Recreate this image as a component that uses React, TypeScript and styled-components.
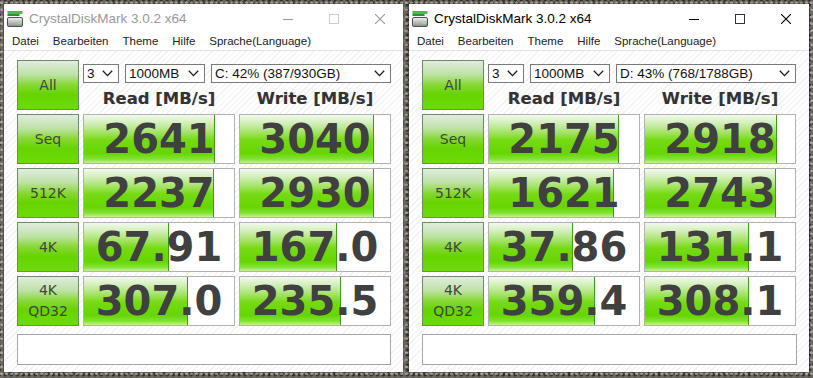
import React from 'react';
import styled, { createGlobalStyle } from 'styled-components';

const GlobalStyle = createGlobalStyle`
  html, body { margin: 0; padding: 0; }
  body {
    width: 813px;
    height: 378px;
    overflow: hidden;
    font-family: "Liberation Sans", Arial, sans-serif;
  }
`;

const Desktop = styled.div`
  width: 813px;
  height: 378px;
  box-sizing: border-box;
  display: flex;
  gap: 6px;
  padding: 4px;
  background:
    radial-gradient(circle at 30% 40%, rgba(215, 208, 195, 0.55) 0 1.1px, transparent 1.7px) 0 0 / 5px 7px,
    radial-gradient(circle at 70% 60%, rgba(25, 23, 21, 0.65) 0 1.3px, transparent 1.9px) 1px 2px / 6px 5px,
    radial-gradient(circle at 50% 50%, rgba(170, 160, 140, 0.5) 0 2px, transparent 2.6px) 2px 3px / 9px 11px,
    radial-gradient(circle at 40% 30%, rgba(60, 56, 52, 0.7) 0 2.5px, transparent 3px) 4px 1px / 13px 9px,
    #6b665f;
`;

const Window = styled.div<{ $w: number }>`
  width: ${(p) => p.$w}px;
  height: 368px;
  display: flex;
  flex-direction: column;
  background: #ffffff;
  box-shadow: 0 0 0 1px rgba(0, 0, 0, 0.18);
`;

const TitleBar = styled.div`
  height: 29px;
  display: flex;
  align-items: center;
  padding-left: 3px;
`;

const Title = styled.span<{ $active: boolean }>`
  margin-left: 6px;
  font-family: "Liberation Sans", Arial, sans-serif;
  font-size: 13.5px;
  color: ${(p) => (p.$active ? '#000000' : '#999999')};
  white-space: nowrap;
`;

const Controls = styled.div`
  margin-left: auto;
  display: flex;
  height: 100%;
`;

const ControlButton = styled.div`
  width: 46px;
  height: 100%;
  display: flex;
  align-items: center;
  justify-content: center;
`;

const MenuBar = styled.div`
  height: 17px;
  display: flex;
  padding-left: 1px;
`;

const MenuItem = styled.span`
  padding: 0 7px;
  font-size: 11.5px;
  line-height: 17px;
  color: #222222;
`;

const Content = styled.div`
  flex: 1;
  border-top: 1px solid #e2e2e2;
  padding: 9px 12px 7px 13px;
  display: flex;
  flex-direction: column;
  background: repeating-linear-gradient(135deg, #ffffff 0 3px, #f2f2f2 3px 4px);
`;

const Board = styled.div`
  display: grid;
  grid-template-columns: 62px 152px 152px;
  grid-auto-rows: 50px;
  gap: 4px;
`;

const LabelButton = styled.div`
  box-sizing: border-box;
  border: 1px solid #6e8a66;
  background: linear-gradient(180deg, #dfece0 0%, #bfe2a6 28%, #86d834 50%, #66d400 70%, #6cdc08 100%);
  display: flex;
  flex-direction: column;
  align-items: center;
  justify-content: center;
  font-family: "DejaVu Sans", Verdana, sans-serif;
  font-size: 14px;
  line-height: 21px;
  color: #3e4838;
`;

const TopPanel = styled.div`
  grid-column: 2 / span 2;
  display: flex;
  flex-direction: column;
  padding-top: 4px;
`;

const Selectors = styled.div`
  display: flex;
  gap: 6px;
`;

const Select = styled.div<{ $w: number }>`
  box-sizing: border-box;
  width: ${(p) => p.$w}px;
  height: 19px;
  border: 1px solid #7a7a7a;
  background: #ffffff;
  display: flex;
  align-items: center;
  justify-content: space-between;
  padding: 0 5px 0 3px;
  font-size: 13.5px;
  color: #111111;
  white-space: nowrap;
`;

const Headers = styled.div`
  margin-top: 6px;
  display: grid;
  grid-template-columns: 152px 152px;
  gap: 4px;
`;

const Header = styled.div`
  text-align: center;
  font-family: "DejaVu Sans", Verdana, sans-serif;
  font-weight: bold;
  font-size: 16.5px;
  line-height: 20px;
  color: #333333;
  text-shadow: 0 0 1px rgba(120, 130, 200, 0.35);
`;

const Cell = styled.div`
  position: relative;
  box-sizing: border-box;
  border: 1px solid #b2b2b2;
  background: #ffffff;
  overflow: hidden;
  display: flex;
  align-items: center;
  justify-content: center;
`;

const Bar = styled.div`
  position: absolute;
  left: 0;
  top: 0;
  bottom: 0;
  box-sizing: border-box;
  border-right: 1px solid #3f9a18;
  background: linear-gradient(180deg, #f3f9ef 0%, #d4efbc 16%, #a0e25e 38%, #76da14 52%, #66d600 80%, #84e238 92%, #c4f296 100%);
`;

const Value = styled.span`
  position: relative;
  font-family: "DejaVu Sans", Verdana, sans-serif;
  font-weight: bold;
  font-size: 40px;
  line-height: 48px;
  color: #404040;
  white-space: nowrap;
`;

const Status = styled.div`
  margin-top: 8px;
  height: 31px;
  box-sizing: border-box;
  border: 1px solid #a6a6a6;
  background: #ffffff;
`;

const AppIcon = () => (
  <svg width="16" height="16" viewBox="0 0 16 16">
    <defs>
      <linearGradient id="drv" x1="0" y1="0" x2="0" y2="1">
        <stop offset="0" stopColor="#f4f4f4" />
        <stop offset="1" stopColor="#8c8c8c" />
      </linearGradient>
    </defs>
    <rect x="0.5" y="0" width="15" height="3" fill="#46c046" />
    <rect x="0.5" y="3" width="12" height="2" fill="#2c922c" />
    <rect x="0.5" y="6.5" width="15" height="9" rx="1.5" fill="url(#drv)" stroke="#505050" />
    <rect x="11" y="11" width="3" height="2" fill="#7cf07c" />
  </svg>
);

const Chevron = () => (
  <svg width="11" height="7" viewBox="0 0 11 7">
    <polyline points="0.8,0.8 5.5,5.6 10.2,0.8" fill="none" stroke="#1a1a1a" strokeWidth="1.3" />
  </svg>
);

const WinGlyph = ({ kind, color }: { kind: 'min' | 'max' | 'close'; color: string }) => (
  <svg width="10" height="10" viewBox="0 0 10 10">
    {kind === 'min' && <line x1="0" y1="5.5" x2="10" y2="5.5" stroke={color} strokeWidth="1" />}
    {kind === 'max' && <rect x="0.5" y="0.5" width="9" height="9" fill="none" stroke={color} strokeWidth="1" />}
    {kind === 'close' && (
      <>
        <line x1="0" y1="0" x2="10" y2="10" stroke={color} strokeWidth="1.1" />
        <line x1="10" y1="0" x2="0" y2="10" stroke={color} strokeWidth="1.1" />
      </>
    )}
  </svg>
);

type Row = { label: string[]; read: string; readPct: number; write: string; writePct: number };

type WinData = { width: number; active: boolean; drive: string; rows: Row[] };

const windows: WinData[] = [
  {
    width: 399,
    active: false,
    drive: 'C: 42% (387/930GB)',
    rows: [
      { label: ['Seq'], read: '2641', readPct: 87.6, write: '3040', writePct: 89 },
      { label: ['512K'], read: '2237', readPct: 86.4, write: '2930', writePct: 89 },
      { label: ['4K'], read: '67.91', readPct: 56.5, write: '167.0', writePct: 64.5 },
      { label: ['4K', 'QD32'], read: '307.0', readPct: 69.5, write: '235.5', writePct: 67 },
    ],
  },
  {
    width: 400,
    active: true,
    drive: 'D: 43% (768/1788GB)',
    rows: [
      { label: ['Seq'], read: '2175', readPct: 86.5, write: '2918', writePct: 88 },
      { label: ['512K'], read: '1621', readPct: 83.5, write: '2743', writePct: 87.5 },
      { label: ['4K'], read: '37.86', readPct: 56, write: '131.1', writePct: 69 },
      { label: ['4K', 'QD32'], read: '359.4', readPct: 70.5, write: '308.1', writePct: 69 },
    ],
  },
];

const menu = ['Datei', 'Bearbeiten', 'Theme', 'Hilfe', 'Sprache(Language)'];

const DiskMarkWindow = ({ data }: { data: WinData }) => {
  const glyphColor = data.active ? '#000000' : '#999999';
  return (
    <Window $w={data.width}>
      <TitleBar>
        <AppIcon />
        <Title $active={data.active}>CrystalDiskMark 3.0.2 x64</Title>
        <Controls>
          <ControlButton>
            <WinGlyph kind="min" color={glyphColor} />
          </ControlButton>
          <ControlButton>
            <WinGlyph kind="max" color={data.active ? '#333333' : '#cccccc'} />
          </ControlButton>
          <ControlButton>
            <WinGlyph kind="close" color={glyphColor} />
          </ControlButton>
        </Controls>
      </TitleBar>
      <MenuBar>
        {menu.map((m) => (
          <MenuItem key={m}>{m}</MenuItem>
        ))}
      </MenuBar>
      <Content>
        <Board>
          <LabelButton>All</LabelButton>
          <TopPanel>
            <Selectors>
              <Select $w={36}>
                <span>3</span>
                <Chevron />
              </Select>
              <Select $w={80}>
                <span>1000MB</span>
                <Chevron />
              </Select>
              <Select $w={180}>
                <span>{data.drive}</span>
                <Chevron />
              </Select>
            </Selectors>
            <Headers>
              <Header>Read [MB/s]</Header>
              <Header>Write [MB/s]</Header>
            </Headers>
          </TopPanel>
          {data.rows.map((r) => (
            <React.Fragment key={r.label.join('-')}>
              <LabelButton>
                {r.label.map((l) => (
                  <span key={l}>{l}</span>
                ))}
              </LabelButton>
              <Cell>
                <Bar style={{ width: `${r.readPct}%` }} />
                <Value>{r.read}</Value>
              </Cell>
              <Cell>
                <Bar style={{ width: `${r.writePct}%` }} />
                <Value>{r.write}</Value>
              </Cell>
            </React.Fragment>
          ))}
        </Board>
        <Status />
      </Content>
    </Window>
  );
};

export default function App() {
  return (
    <>
      <GlobalStyle />
      <Desktop>
        {windows.map((w) => (
          <DiskMarkWindow key={w.drive} data={w} />
        ))}
      </Desktop>
    </>
  );
}
